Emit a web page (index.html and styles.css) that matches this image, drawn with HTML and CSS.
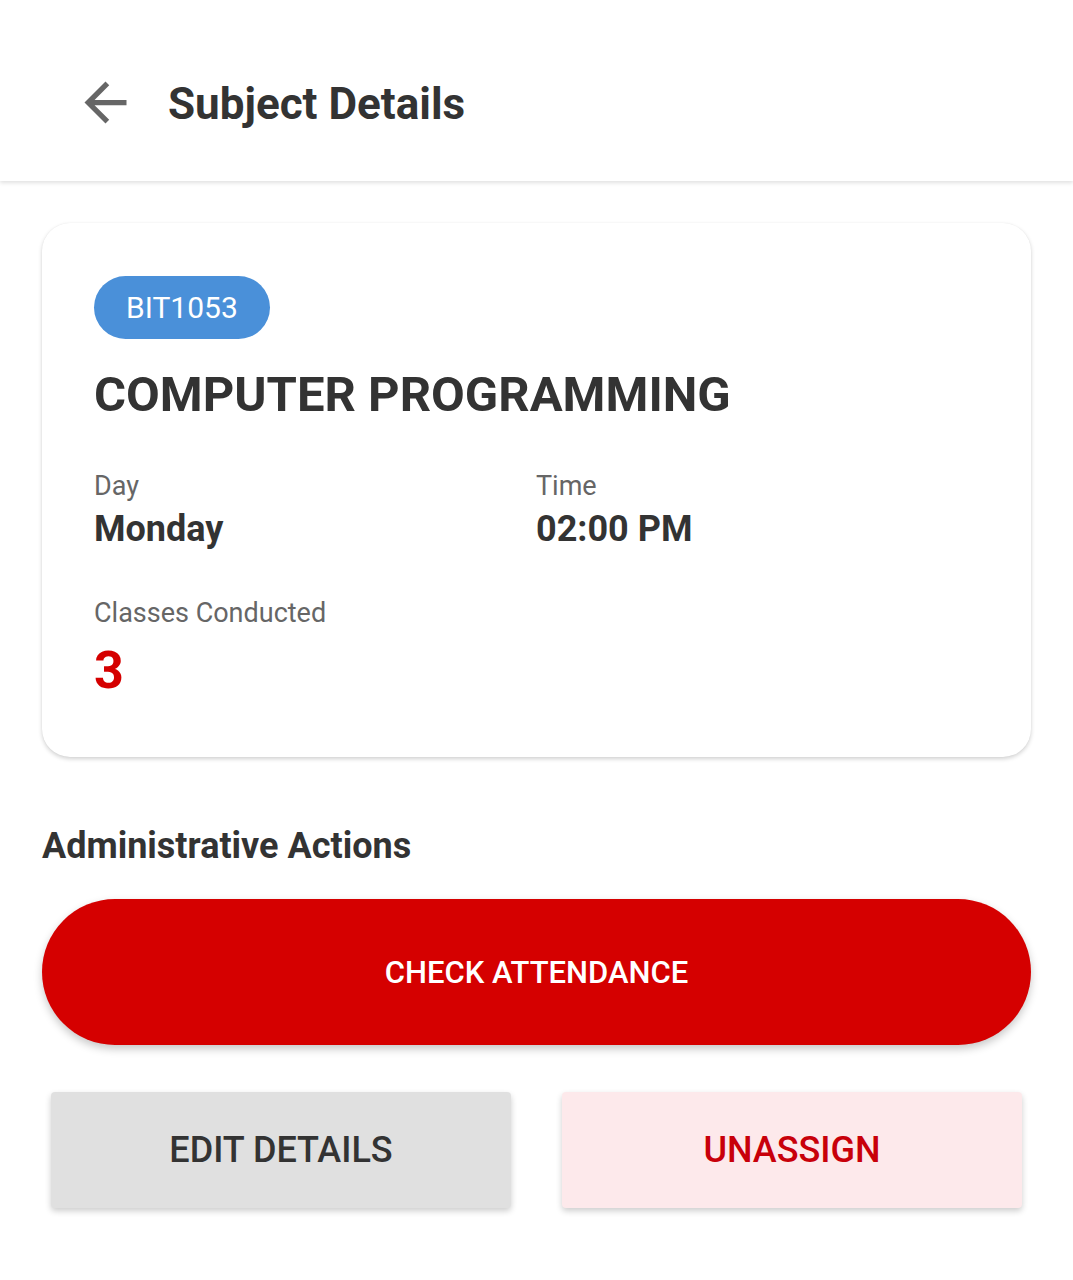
FILE: index.html
```html
<!DOCTYPE html>
<html lang="en">
<head>
  <meta charset="UTF-8">
  <meta name="viewport" content="width=device-width, initial-scale=1.0">
  <title>Subject Details</title>
  <link rel="stylesheet" href="styles.css">
</head>
<body>

  <header class="topbar">
    <button class="back" aria-label="Back">
      <svg viewBox="0 0 24 24" width="63" height="63"><path d="M20 11H7.83l5.59-5.59L12 4l-8 8 8 8 1.41-1.41L7.83 13H20v-2z" fill="#666"/></svg>
    </button>
    <h1>Subject Details</h1>
  </header>

  <main class="content">
    <section class="card">
      <span class="badge">BIT1053</span>
      <h2 class="subject">COMPUTER PROGRAMMING</h2>

      <div class="info-grid">
        <div class="info">
          <p class="label">Day</p>
          <p class="value">Monday</p>
        </div>
        <div class="info">
          <p class="label">Time</p>
          <p class="value">02:00 PM</p>
        </div>
      </div>

      <div class="info count">
        <p class="label">Classes Conducted</p>
        <p class="value big">3</p>
      </div>
    </section>

    <h3 class="section-title">Administrative Actions</h3>

    <button class="btn-primary">CHECK ATTENDANCE</button>

    <div class="actions">
      <button class="btn-edit">EDIT DETAILS</button>
      <button class="btn-unassign">UNASSIGN</button>
    </div>
  </main>

</body>
</html>
```

FILE: styles.css
```css
/* Basic Reset */
* {
  margin: 0;
  padding: 0;
  box-sizing: border-box;
}

body {
  font-family: Roboto, "Noto Sans", sans-serif;
  background: #fff;
  color: #333;
}

.topbar {
  height: 181px;
  display: flex;
  align-items: center;
  padding: 26px 0 0 74px;
  background: #fff;
  box-shadow: 0 2px 4px rgba(0, 0, 0, 0.12);
  position: relative;
  z-index: 1;
}

.back {
  border: none;
  background: none;
  display: flex;
  width: 63px;
  height: 63px;
  margin-top: -2px;
  cursor: pointer;
}

.topbar h1 {
  margin-left: 31px;
  font-size: 44px;
  font-weight: 700;
  color: #333;
  line-height: 1.2;
  margin-top: 2px;
}

.content {
  padding: 42px 42px 40px;
}

.card {
  background: #fff;
  border-radius: 28px;
  padding: 53px 52px 55px;
  box-shadow: 0 2px 4px rgba(0, 0, 0, 0.18), 0 0 1px rgba(0, 0, 0, 0.08);
}

.badge {
  display: inline-block;
  height: 63px;
  line-height: 63px;
  padding: 0 32px;
  border-radius: 32px;
  background: #4a90d9;
  color: #fff;
  font-size: 30px;
}

.subject {
  margin-top: 24px;
  font-size: 49px;
  font-weight: 700;
  line-height: 1.3;
  color: #333;
}

.info-grid {
  display: grid;
  grid-template-columns: 442px 1fr;
  margin-top: 43px;
}

.label {
  font-size: 27px;
  line-height: 1.2;
  color: #666;
}

.value {
  margin-top: 6px;
  font-size: 36px;
  font-weight: 700;
  line-height: 1.2;
  color: #333;
}

.count {
  margin-top: 46px;
}

.value.big {
  margin-top: 10px;
  font-size: 52px;
  color: #d50000;
}

.section-title {
  margin-top: 68px;
  font-size: 36px;
  font-weight: 700;
  line-height: 1.2;
  color: #333;
}

button {
  font-family: inherit;
  cursor: pointer;
}

.btn-primary {
  display: block;
  width: 100%;
  height: 146px;
  margin-top: 31px;
  border: none;
  border-radius: 73px;
  background: #d50000;
  color: #fff;
  font-size: 31px;
  font-weight: 500;
  box-shadow: 0 4px 8px rgba(0, 0, 0, 0.22);
}

.actions {
  display: grid;
  grid-template-columns: 1fr 1fr;
  gap: 51px;
  margin-top: 47px;
  padding: 0 9px;
}

.btn-edit,
.btn-unassign {
  height: 116px;
  border: none;
  border-radius: 4px;
  font-size: 36px;
  font-weight: 500;
  box-shadow: 0 3px 6px rgba(0, 0, 0, 0.2);
}

.btn-edit {
  background: #e0e0e0;
  color: #333;
}

.btn-unassign {
  background: #fde9eb;
  color: #c8000a;
}
```
